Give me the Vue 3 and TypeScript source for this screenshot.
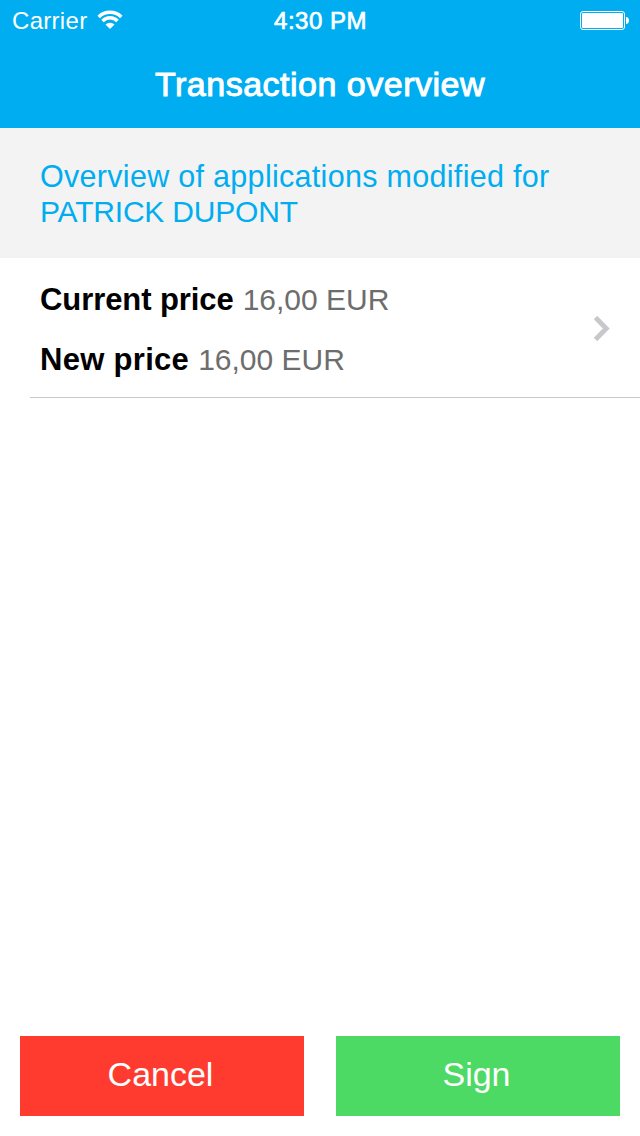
<script setup lang="ts">
interface PriceLine {
  label: string
  amount: string
  kind: string
}

const customer = 'PATRICK DUPONT'
const prices: PriceLine[] = [
  { label: 'Current price', amount: '16,00 EUR', kind: 'current' },
  { label: 'New price', amount: '16,00 EUR', kind: 'new' },
]
</script>

<template>
  <main class="screen">
    <header class="top">
      <div class="status">
        <div class="network">
          <span class="carrier">Carrier</span>
          <svg class="wifi" width="26" height="20" viewBox="0 0 26 20">
            <g fill="none" stroke="#fff" stroke-width="3.5">
              <path d="M1.7 6.9a16.2 16.2 0 0 1 22.6 0" />
              <path d="M5.5 10.9a10.7 10.7 0 0 1 15 0" />
            </g>
            <path d="M8.5 14.5a6.4 6.4 0 0 1 9 0L13 19z" fill="#fff" />
          </svg>
        </div>
        <span class="clock">4:30 PM</span>
        <svg class="battery" width="50" height="20" viewBox="0 0 50 20">
          <rect x="0.5" y="1.5" width="44" height="18" rx="2.5" fill="none" stroke="#fff" />
          <rect x="2" y="3" width="41" height="15" rx="1" fill="#fff" />
          <path d="M46 7c4 0 4 7 0 7z" fill="#fff" />
        </svg>
      </div>
      <h1 class="title">Transaction overview</h1>
    </header>

    <section class="intro">
      <div class="lead">Overview of applications modified for</div>
      <div class="name">{{ customer }}</div>
    </section>

    <section class="row">
      <div class="prices">
        <div v-for="p in prices" :key="p.kind" class="price">
          <b class="label" :class="p.kind">{{ p.label }}</b>
          <span class="amount">{{ p.amount }}</span>
        </div>
      </div>
      <svg class="chevron" width="18" height="26" viewBox="0 0 18 26">
        <path d="M2.5 1.5L13.3 12.5 2.5 23.5" fill="none" stroke="#c7c7cc" stroke-width="4.8" />
      </svg>
    </section>

    <footer class="actions">
      <button class="btn cancel" type="button">Cancel</button>
      <button class="btn sign" type="button">Sign</button>
    </footer>
  </main>
</template>

<style>
body {
  margin: 0;
  background: #fff;
}
</style>

<style scoped>
.screen {
  width: 640px;
  height: 1136px;
  display: flex;
  flex-direction: column;
  background: #fff;
  font-family: "Liberation Sans", Arial, sans-serif;
  overflow: hidden;
}
.top {
  height: 128px;
  background: #00adf0;
  color: #fff;
}
.status {
  height: 40px;
  padding: 0 10px 0 12px;
  display: grid;
  grid-template-columns: 1fr auto 1fr;
  align-items: center;
  font-size: 24px;
  line-height: 42px;
}
.network {
  display: flex;
  align-items: center;
  gap: 10px;
}
.carrier {
  letter-spacing: 0.3px;
}
.wifi,
.battery {
  margin-bottom: 2px;
}
.clock {
  margin-right: 1px;
  letter-spacing: 0.5px;
  -webkit-text-stroke: 0.7px #fff;
}
.battery {
  justify-self: end;
}
.title {
  margin: 0;
  height: 88px;
  line-height: 88px;
  text-align: center;
  font-size: 34px;
  font-weight: 400;
  letter-spacing: 0.5px;
  -webkit-text-stroke: 1px #fff;
}
.intro {
  height: 99px;
  padding: 31px 40px 0;
  background: #f3f3f3;
  color: #00adf0;
  font-size: 30px;
  line-height: 35px;
  white-space: nowrap;
}
.lead {
  font-size: 30.5px;
  letter-spacing: 0.3px;
}
.name {
  letter-spacing: -0.2px;
}
.row {
  height: 137px;
  margin-left: 30px;
  padding: 2px 29px 0 10px;
  display: flex;
  align-items: center;
  justify-content: space-between;
  border-bottom: 1px solid #c8c7cc;
}
.price {
  display: flex;
  gap: 9px;
  height: 60px;
  line-height: 62px;
  font-size: 30px;
}
.label {
  color: #000;
  font-size: 31px;
}
.current {
  letter-spacing: -0.08px;
}
.new {
  letter-spacing: 0.3px;
}
.amount {
  color: #6d6d6d;
}
.actions {
  margin-top: auto;
  padding: 0 20px 20px;
  display: flex;
  gap: 32px;
}
.btn {
  flex: 1;
  height: 80px;
  border: 0;
  padding: 0 3px 4px 0;
  color: #fff;
  font-family: inherit;
  font-size: 34px;
}
.cancel {
  background: #ff3b30;
}
.sign {
  background: #4cd964;
}
</style>
